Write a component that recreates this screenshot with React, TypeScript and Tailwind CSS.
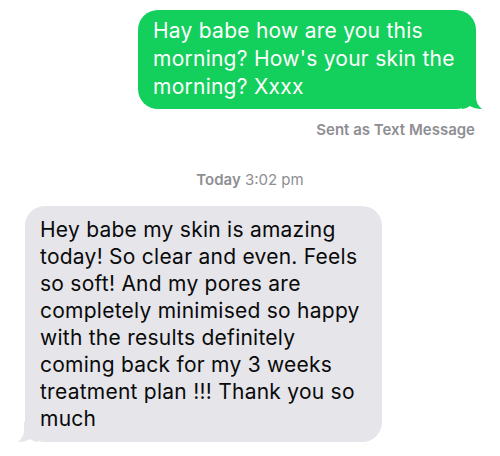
export default function App() {
  return (
    <div className="w-[500px] h-[456px] bg-white overflow-hidden font-['Inter','Liberation_Sans',sans-serif]">
      {/* Outgoing (SMS) */}
      <div className="flex flex-col items-end pt-[10px] pr-[24px]">
        <div className="relative w-[338px] rounded-[20px] bg-[#13cf5b] pl-[15px] pr-[10px] pt-[7px] pb-[8px] text-[21px] leading-[28px] tracking-[0.25px] text-white">
          Hay babe how are you this morning? How's your skin the morning? Xxxx
          <svg
            className="absolute right-[-6px] bottom-0 w-[20px] h-[20px] text-[#13cf5b]"
            viewBox="0 0 20 20"
            fill="currentColor"
          >
            <path d="M0 0 L14 0 L14 8 C14 13 16 17 20 20 C15 20 11 19 8 17 C5 19 2 20 0 20 Z" />
          </svg>
        </div>
        <p className="mt-[11px] mr-px text-[15px] leading-[20px] font-semibold text-[#8e8e93]">
          Sent as Text Message
        </p>
      </div>

      {/* Timestamp */}
      <p className="mt-[30px] text-center text-[15px] leading-[20px] text-[#8e8e93]">
        <span className="font-semibold">Today</span> 3:02 pm
      </p>

      {/* Incoming */}
      <div className="pl-[25px] mt-[16px]">
        <div className="relative w-[357px] rounded-[20px] bg-[#e5e5ea] pl-[15px] pr-[10px] pt-[10px] pb-[10px] text-[21px] leading-[27px] tracking-[0.25px] text-[#0a0a0a]">
          Hey babe my skin is amazing today! So clear and even. Feels so soft! And my pores are completely minimised so happy with the results definitely coming back for my 3 weeks treatment plan !!! Thank you so much
          <svg
            className="absolute left-[-7px] bottom-0 w-[20px] h-[20px] text-[#e5e5ea]"
            viewBox="0 0 20 20"
            fill="currentColor"
          >
            <path d="M20 0 L6 0 L6 8 C6 13 4 17 0 20 C5 20 9 19 12 17 C15 19 18 20 20 20 Z" />
          </svg>
        </div>
      </div>
    </div>
  );
}
